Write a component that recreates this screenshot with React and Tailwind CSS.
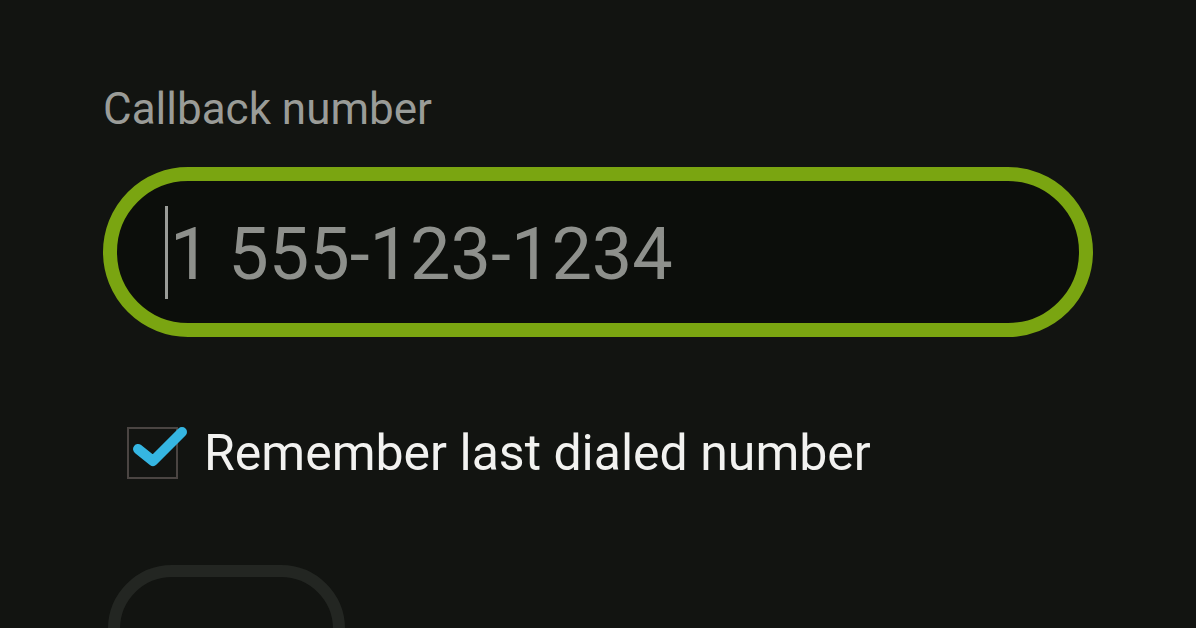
export default function App() {
  return (
    <div
      className="w-[1196px] h-[628px] overflow-hidden bg-[#121411] flex flex-col"
      style={{ fontFamily: "Roboto, 'Liberation Sans', sans-serif" }}
    >
      <div className="shrink-0 pl-[103px] pt-[86px] text-[44px] leading-[46px] text-[#9a9c98]">
        Callback number
      </div>
      <div className="shrink-0 ml-[103px] mt-[35px] w-[990px] h-[170px] rounded-full border-[14px] border-[#7aa511] bg-[#0c0e0b] flex items-center pl-[48px]">
        <div className="w-[3px] h-[93px] bg-[#9a9c98]" />
        <div className="ml-[2px] mt-[6px] text-[72px] leading-none text-[#8e908c]">
          1 555-123-1234
        </div>
      </div>
      <div className="shrink-0 ml-[127px] mt-[90px] flex items-center">
        <div className="relative w-[51px] h-[52px] border-2 border-[#4a4542]">
          <svg
            className="absolute left-[-2px] top-[-12px]"
            width="64"
            height="64"
            viewBox="0 0 64 64"
          >
            <path
              d="M11 32 L26 44 L55 15"
              fill="none"
              stroke="#35b6e2"
              strokeWidth="10"
              strokeLinecap="round"
              strokeLinejoin="round"
            />
          </svg>
        </div>
        <div className="ml-[26px] text-[50px] leading-none text-[#f2f2f0]">
          Remember last dialed number
        </div>
      </div>
      <div className="shrink-0 ml-[108px] mt-[86px] w-[237px] h-[140px] rounded-[64px] border-[12px] border-[#232622]" />
    </div>
  );
}
